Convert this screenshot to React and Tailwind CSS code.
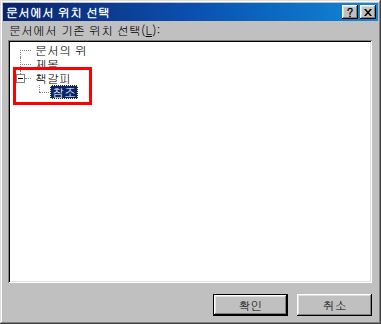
import React from 'react';

const font = "font-['Gulim','Noto_Sans_CJK_KR','Noto_Sans',sans-serif]";

const raised =
  'shadow-[inset_-1px_-1px_#000,inset_1px_1px_#fff,inset_-2px_-2px_#808080,inset_2px_2px_#dfdfdf]';

function TitleButton({ children }) {
  return (
    <div className={`w-[16px] h-[14px] bg-[#c0c0c0] ${raised} flex items-center justify-center text-black text-[12px] font-bold leading-none`}>
      {children}
    </div>
  );
}

function Button({ children, isDefault }) {
  return (
    <div className={`w-[75px] h-[22px] ${isDefault ? 'border border-black' : ''}`}>
      <div className={`w-full h-full bg-[#c0c0c0] ${raised} flex items-center justify-center text-[12px] text-black`}>
        {children}
      </div>
    </div>
  );
}

function Row({ children, gutter }) {
  return (
    <div className="h-[14px] flex items-center relative">
      {gutter}
      {children}
    </div>
  );
}

export default function App() {
  return (
    <div className={`w-[381px] h-[324px] bg-[#c0c0c0] p-[3px] flex flex-col ${font} shadow-[inset_-1px_-1px_#404040,inset_1px_1px_#dfdfdf,inset_-2px_-2px_#808080,inset_2px_2px_#fff]`}>
      {/* Title bar */}
      <div className="h-[18px] bg-gradient-to-r from-[#0a246a] via-[#0b4fb0] to-[#1488d6] flex items-center pl-[3px] pr-[2px]">
        <span className="text-white text-[12px] font-bold flex-1 leading-none">문서에서 위치 선택</span>
        <div className="flex gap-[2px]">
          <TitleButton>?</TitleButton>
          <TitleButton>
            <svg width="8" height="7" viewBox="0 0 8 7">
              <path d="M0 0h2l2 2.5L6 0h2L5 3.5 8 7H6L4 4.5 2 7H0l3-3.5z" fill="#000" />
            </svg>
          </TitleButton>
        </div>
      </div>

      {/* Content */}
      <div className="flex-1 flex flex-col pl-[5px] pr-[6px]">
        <div className="mt-[2px] h-[14px] pl-[1px] text-[12px] text-black leading-[14px]">
          문서에서 기존 위치 선택(<span className="underline">L</span>):
        </div>

        <div className="mt-[3px] h-[243px] bg-white relative shadow-[inset_1px_1px_#808080,inset_-1px_-1px_#fff,inset_2px_2px_#000,inset_-2px_-2px_#dfdfdf] p-[2px] pt-[3px]">
          <div className="text-[12px] text-black">
            <Row
              gutter={
                <div className="w-[24px] h-full relative">
                  <span className="absolute left-[10px] top-[7px] bottom-0 border-l border-dotted border-[#808080]" />
                  <span className="absolute left-[10px] top-[7px] w-[11px] border-t border-dotted border-[#808080]" />
                </div>
              }
            >
              <span className="pl-[1px] block h-[12px] leading-[12px]">문서의 위</span>
            </Row>
            <Row
              gutter={
                <div className="w-[24px] h-full relative">
                  <span className="absolute left-[10px] top-0 bottom-0 border-l border-dotted border-[#808080]" />
                  <span className="absolute left-[10px] top-[7px] w-[11px] border-t border-dotted border-[#808080]" />
                </div>
              }
            >
              <span className="pl-[1px] block h-[12px] leading-[12px]">제목</span>
            </Row>
            <Row
              gutter={
                <div className="w-[24px] h-full relative">
                  <span className="absolute left-[10px] top-0 h-[3px] border-l border-dotted border-[#808080]" />
                  <span className="absolute left-[6px] top-[3px] w-[9px] h-[9px] border border-[#808080] bg-white flex items-center justify-center">
                    <span className="w-[5px] h-px bg-black" />
                  </span>
                  <span className="absolute left-[15px] top-[7px] w-[6px] border-t border-dotted border-[#808080]" />
                </div>
              }
            >
              <span className="pl-[1px] block h-[12px] leading-[12px]">책갈피</span>
            </Row>
            <Row
              gutter={
                <div className="w-[40px] h-full relative shrink-0">
                  <span className="absolute left-[29px] top-0 h-[7px] border-l border-dotted border-[#808080]" />
                  <span className="absolute left-[29px] top-[7px] w-[10px] border-t border-dotted border-[#808080]" />
                </div>
              }
            >
              <span className="h-[14px] px-[1px] bg-[#0a246a] text-white border border-dotted border-[#ffff80] flex items-center leading-[12px]">참조</span>
            </Row>
          </div>

          {/* Red highlight annotation */}
          <div className="absolute left-[5px] top-[27px] w-[79px] h-[38px] border-[3px] border-[#ff0000]" />
        </div>

        <div className="mt-[11px] flex justify-end gap-[9px]">
          <Button isDefault>확인</Button>
          <Button>취소</Button>
        </div>
      </div>
    </div>
  );
}
